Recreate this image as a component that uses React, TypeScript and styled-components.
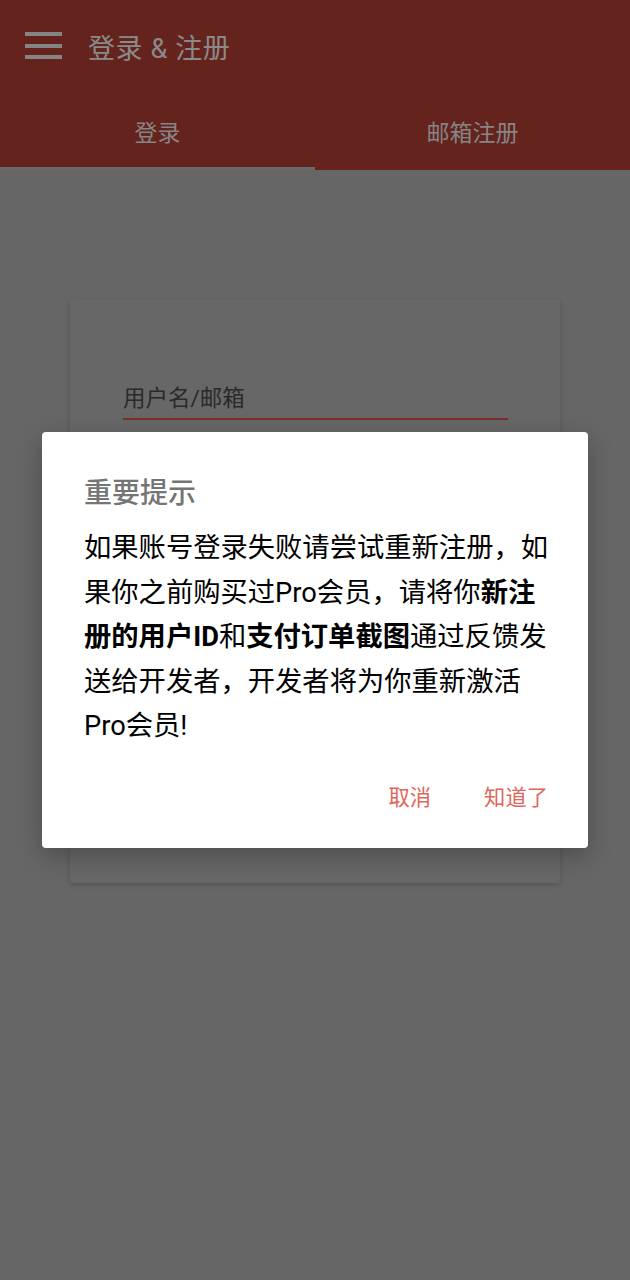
import React from "react";
import styled, { createGlobalStyle } from "styled-components";

const Global = createGlobalStyle`
  html, body { margin: 0; padding: 0; height: 100%; background: #666666; }
  #root { min-height: 100%; }
  * { box-sizing: border-box; }
  body { font-family: Roboto, "Noto Sans CJK SC", sans-serif; }
`;

const Page = styled.div`
  position: relative;
  width: 630px;
  height: 1280px;
  background: #666666;
  overflow: hidden;
`;

const AppBar = styled.header`
  background: #65231e;
  display: flex;
  flex-direction: column;
`;

const Toolbar = styled.div`
  height: 95px;
  display: flex;
  align-items: center;
  padding-left: 25px;
  gap: 26px;
  padding-bottom: 2px;
`;

const MenuButton = styled.div`
  width: 37px;
  display: flex;
  flex-direction: column;
  gap: 7.5px;
  margin-top: -2px;
`;

const MenuBar = styled.span`
  display: block;
  height: 4px;
  background: #858585;
`;

const Title = styled.h1`
  margin: 0;
  font-size: 27px;
  font-weight: 400;
  color: #8a8a8a;
  letter-spacing: 0.6px;
`;

const Tabs = styled.div`
  display: flex;
  height: 75px;
`;

const Tab = styled.div<{ $active?: boolean }>`
  flex: 1;
  display: flex;
  align-items: center;
  justify-content: center;
  font-size: 23px;
  color: #858585;
  border-bottom: 3px solid ${(p) => (p.$active ? "#6a6a6a" : "transparent")};
  padding-top: 0;
`;

const Content = styled.main`
  padding: 129px 70px 0;
`;

const Card = styled.section`
  height: 584px;
  background: #676767;
  border-radius: 3px;
  box-shadow: 0 2px 5px rgba(0, 0, 0, 0.18);
  padding: 84px 52px 0 53px;
`;

const Field = styled.div`
  border-bottom: 2px solid #7b2e2a;
  padding-bottom: 5px;
`;

const FieldLabel = styled.div`
  font-size: 22.5px;
  line-height: 30px;
  color: #2a2a2a;
`;

const Scrim = styled.div`
  position: absolute;
  inset: 0;
`;

const Dialog = styled.div`
  position: absolute;
  left: 42px;
  top: 432px;
  width: 546px;
  height: 416px;
  background: #ffffff;
  border-radius: 4px;
  box-shadow: 0 8px 24px rgba(0, 0, 0, 0.25);
  padding: 44px 24px 0 42px;
  display: flex;
  flex-direction: column;
`;

const DialogTitle = styled.h2`
  margin: 0;
  font-size: 28px;
  line-height: 36px;
  font-weight: 500;
  color: #757575;
`;

const DialogBody = styled.p`
  margin: 14px 0 0;
  font-size: 27.3px;
  line-height: 44.5px;
  color: #000000;
  white-space: nowrap;
`;

const Strong = styled.b`
  font-weight: 700;
`;

const Actions = styled.div`
  display: flex;
  justify-content: flex-end;
  gap: 21px;
  margin-top: 23px;
`;

const ActionButton = styled.button`
  height: 48px;
  padding: 0 16px;
  border: none;
  background: transparent;
  font-family: Roboto, "Noto Sans CJK SC", sans-serif;
  font-size: 21.3px;
  color: #e0665c;
  cursor: pointer;
`;

export default function App() {
  return (
    <>
      <Global />
      <Page>
        <AppBar>
          <Toolbar>
            <MenuButton>
              <MenuBar />
              <MenuBar />
              <MenuBar />
            </MenuButton>
            <Title>登录 &amp; 注册</Title>
          </Toolbar>
          <Tabs>
            <Tab $active>登录</Tab>
            <Tab>邮箱注册</Tab>
          </Tabs>
        </AppBar>
        <Content>
          <Card>
            <Field>
              <FieldLabel>用户名/邮箱</FieldLabel>
            </Field>
          </Card>
        </Content>
        <Scrim>
          <Dialog>
            <DialogTitle>重要提示</DialogTitle>
            <DialogBody>
              如果账号登录失败请尝试重新注册，如
              <br />
              果你之前购买过Pro会员，请将你<Strong>新注</Strong>
              <br />
              <Strong>册的用户ID</Strong>和<Strong>支付订单截图</Strong>通过反馈发
              <br />
              送给开发者，开发者将为你重新激活
              <br />
              Pro会员!
            </DialogBody>
            <Actions>
              <ActionButton>取消</ActionButton>
              <ActionButton>知道了</ActionButton>
            </Actions>
          </Dialog>
        </Scrim>
      </Page>
    </>
  );
}
